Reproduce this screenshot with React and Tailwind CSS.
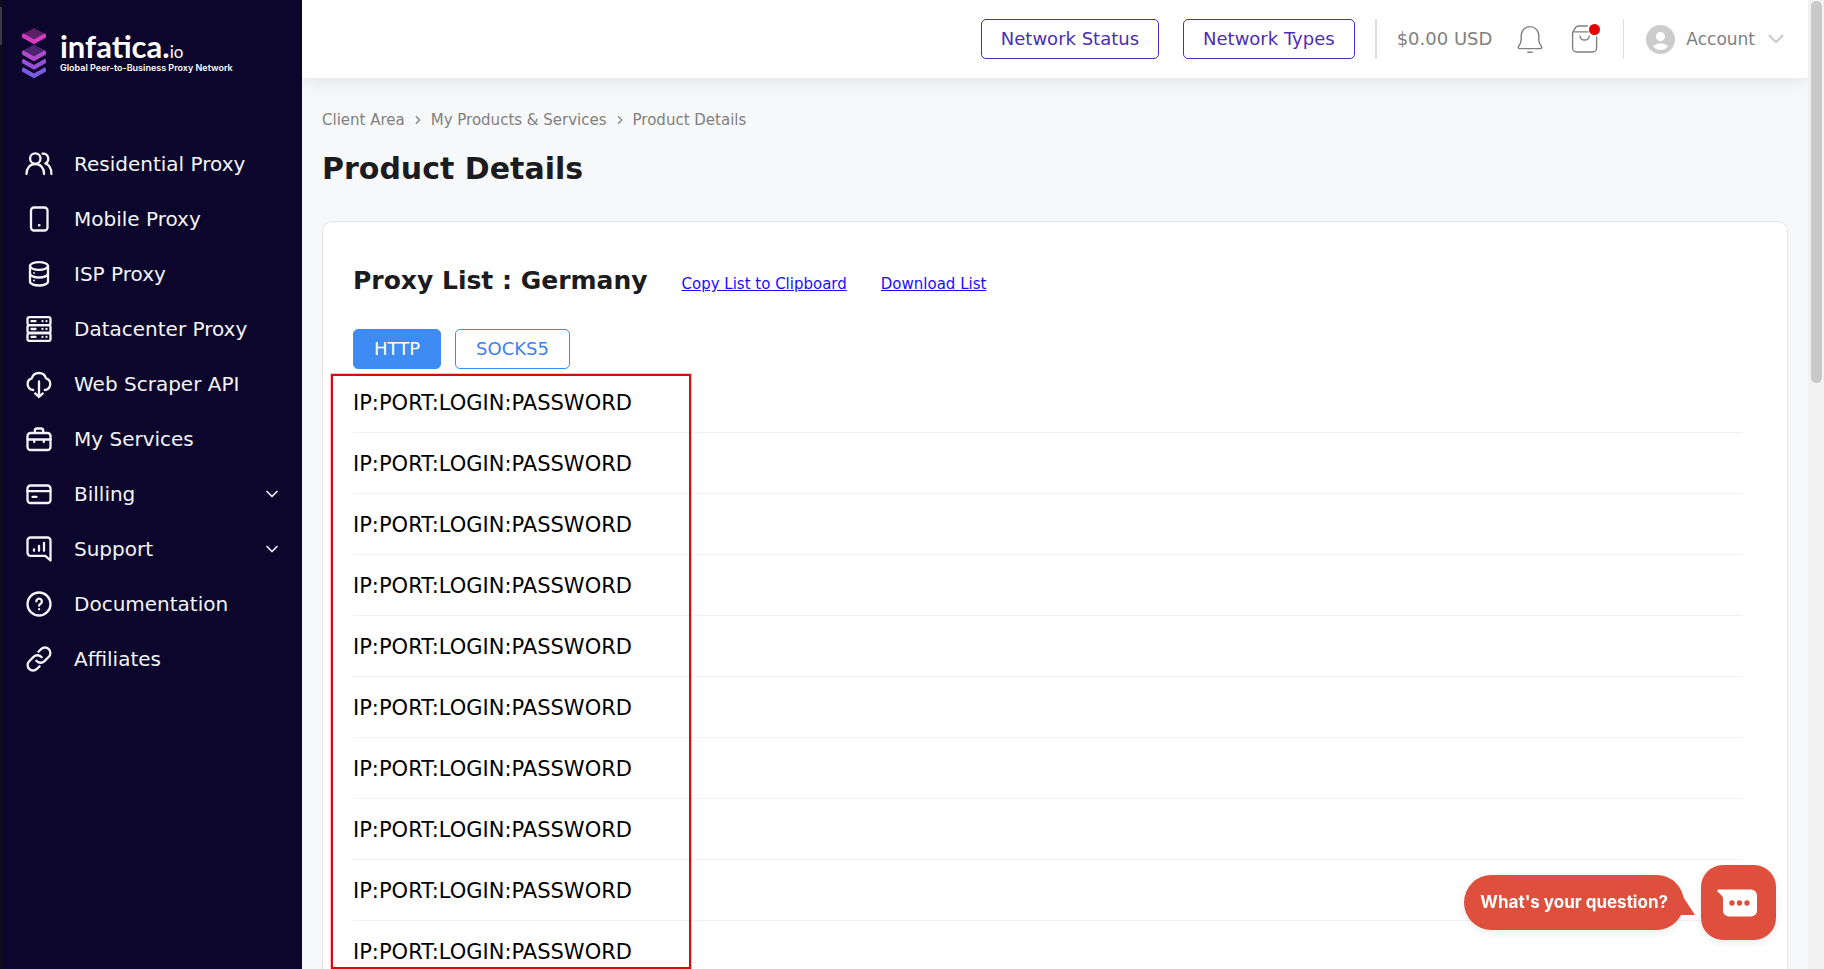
import { ChevronDown, ChevronRight } from "lucide-react";

function NavIcon({ children }) {
   return (
      <svg
         className="size-7 shrink-0"
         viewBox="0 0 28 28"
         fill="none"
         stroke="currentColor"
         strokeWidth="2.3"
         strokeLinecap="round"
         strokeLinejoin="round"
         aria-hidden="true"
      >
         {children}
      </svg>
   );
}

const menu = [
   {
      label: "Residential Proxy",
      icon: (
         <NavIcon>
            <circle cx="10.3" cy="8.6" r="5.2" />
            <path d="M1.5 24c0-6 3.6-10 8.8-10s8.8 4 8.8 10" />
            <path d="M17.4 3.6a5.2 5.2 0 0 1 3 9.8c3.6 1.4 6 5.4 6 10.6" />
         </NavIcon>
      ),
   },
   {
      label: "Mobile Proxy",
      icon: (
         <NavIcon>
            <rect x="6" y="2.5" width="16.5" height="23" rx="3" />
            <path d="M14.2 20.2v.1" strokeWidth="2.6" />
         </NavIcon>
      ),
   },
   {
      label: "ISP Proxy",
      icon: (
         <NavIcon>
            <ellipse cx="14" cy="6" rx="9" ry="3.8" />
            <path d="M5 6v15.5c0 2.3 4 4 9 4s9-1.7 9-4V6" />
            <path d="M5 13.5c0 2.3 4 4 9 4s9-1.7 9-4" />
            <path d="M9 12.8v.1M9 20.4v.1" strokeWidth="1.8" />
         </NavIcon>
      ),
   },
   {
      label: "Datacenter Proxy",
      icon: (
         <NavIcon>
            <rect x="2.5" y="2.2" width="23" height="7.9" rx="2" />
            <rect x="2.5" y="10.1" width="23" height="7.9" rx="2" />
            <rect x="2.5" y="18" width="23" height="7.9" rx="2" />
            <path d="M6.5 6.2h4M6.5 14h4M6.5 21.9h4" />
            <path d="M17.5 6.2v.01M21.5 6.2v.01M17.5 14v.01M21.5 14v.01M17.5 21.9v.01M21.5 21.9v.01" />
         </NavIcon>
      ),
   },
   {
      label: "Web Scraper API",
      icon: (
         <NavIcon>
            <path d="M8.2 20A6 6 0 0 1 6.8 8.3a7.4 7.4 0 0 1 14.2 0A6 6 0 0 1 19.8 20" />
            <path d="M14 11.5v15M10.2 23.4l3.8 3.4 3.8-3.4" />
         </NavIcon>
      ),
   },
   {
      label: "My Services",
      icon: (
         <NavIcon>
            <rect x="2.5" y="8" width="23" height="17" rx="3" />
            <path d="M9.8 8V5.8a2.3 2.3 0 0 1 2.3-2.3h3.8a2.3 2.3 0 0 1 2.3 2.3V8" />
            <path d="M2.5 14.5h23M9.2 14.5v2.5M18.8 14.5v2.5" />
         </NavIcon>
      ),
   },
   {
      label: "Billing",
      open: true,
      icon: (
         <NavIcon>
            <rect x="2.5" y="5.5" width="23" height="17.5" rx="3" />
            <path d="M2.5 11.2h23M7.5 16.8h4" />
         </NavIcon>
      ),
   },
   {
      label: "Support",
      open: true,
      icon: (
         <NavIcon>
            <path d="M25.5 25.5v-20a3 3 0 0 0-3-3h-17a3 3 0 0 0-3 3v12.300a3 3 0 0 0 3 3h14.800z" />
            <path d="M9 14.3v1.500M14 11v4.800M19 8v7.800" />
         </NavIcon>
      ),
   },
   {
      label: "Documentation",
      icon: (
         <NavIcon>
            <circle cx="14" cy="14" r="11.5" />
            <path d="M11.3 11.4a2.8 2.8 0 1 1 4.3 2.4c-1 .6-1.5 1-1.5 1.9M14.1 19.2v.1" />
         </NavIcon>
      ),
   },
   {
      label: "Affiliates",
      icon: (
         <NavIcon>
            <path d="M11.3 15.8a5.6 5.6 0 0 0 8.2.3l4.3-4.3a5.4 5.4 0 0 0-7.7-7.7l-2.7 2.7" />
            <path d="M16.7 12.2a5.6 5.6 0 0 0-8.2-.3l-4.3 4.3a5.4 5.4 0 0 0 7.7 7.7l2.7-2.7" />
         </NavIcon>
      ),
   },
];

const proxies = Array.from({ length: 10 }, () => "IP:PORT:LOGIN:PASSWORD");

function Logo() {
   return (
      <a href="#" className="flex items-start gap-[14px] pl-5 pt-7 text-white">
         <svg className="h-[50px] w-6 shrink-0" viewBox="0 0 24 50" aria-hidden="true">
            <path d="M12 0l12 6.5-12 7.5L0 6.5z" fill="#5b1f66" />
            <path d="M12 16.5l12 6.5-12 7.5L0 23z" fill="#4c2470" />
            <g fill="none" strokeWidth="4.2" strokeLinejoin="round">
               <path d="M0 7l12 6.800L24 7" stroke="#d43bc0" />
               <path d="M0 24l12 6.800L24 24" stroke="#b04bce" />
               <path d="M0 32.500l12 6.800 12-6.800" stroke="#9650d6" />
               <path d="M0 41l12 6.800L24 41" stroke="#7a5be0" />
            </g>
         </svg>
         <span className="flex flex-col pt-2">
            <span className="font-['Lato'] text-[31px] leading-5 font-bold">
               infatica.<span className="text-[17px] font-normal">io</span>
            </span>
            <span className="font-['Inter'] text-[9px] leading-3 font-semibold">
               Global Peer-to-Business Proxy Network
            </span>
         </span>
      </a>
   );
}

function Sidebar() {
   return (
      <aside className="flex w-[302px] shrink-0 bg-[#0c062c]">
         <div className="w-[2px] shrink-0 bg-[#111111] pt-[7px]">
            <div className="h-[38px] bg-[#3a3a3a]" />
         </div>
         <div className="flex-1">
            <Logo />
            <nav className="mt-[58px]">
               {menu.map((item) => (
                  <a
                     key={item.label}
                     href="#"
                     className="flex h-[55px] items-center pl-[23px] pr-5 text-xl text-gray-100"
                  >
                     {item.icon}
                     <span className="ml-[21px] flex-1">{item.label}</span>
                     {item.open && <ChevronDown className="size-5" />}
                  </a>
               ))}
            </nav>
         </div>
      </aside>
   );
}

function Header() {
   return (
      <header className="flex h-[78px] shrink-0 items-center justify-end bg-white pr-6 text-lg text-[#808080] shadow-[0_4px_16px_rgba(0,0,0,0.08)]">
         <button className="h-10 rounded-[5px] border border-[#4b2db9] px-[19px] text-[#4b2db9]">
            Network Status
         </button>
         <button className="ml-6 h-10 rounded-[5px] border border-[#4b2db9] px-[19px] text-[#4b2db9]">
            Network Types
         </button>
         <div className="ml-5 h-10 w-[2px] bg-[#dedede]" />
         <span className="ml-5">$0.00 USD</span>
         <button aria-label="Notifications" className="ml-6">
            <svg className="size-7" viewBox="0 0 28 28" fill="none" stroke="#808080" strokeWidth="1.4" strokeLinecap="round" strokeLinejoin="round">
               <path d="M5.2 10.4a8.8 8.8 0 0 1 17.6 0v4.2c0 2.6.8 4.4 2.4 6.4 1 1.3.6 2.6-1 2.6H3.8c-1.6 0-2-1.3-1-2.6 1.6-2 2.4-3.8 2.4-6.4z" />
               <path d="M11.8 27.2h4.4" />
            </svg>
         </button>
         <button aria-label="Cart" className="relative ml-[27px]">
            <svg className="size-7" viewBox="0 0 28 28" fill="none" stroke="#808080" strokeWidth="1.4" strokeLinecap="round" strokeLinejoin="round">
               <path d="M16.5 1H7.6c-1.4 0-2.3.4-3 1.5L2.2 6.4C1.7 7.2 1.6 7.8 1.6 8.8V23a4 4 0 0 0 4 4h16a4 4 0 0 0 4-4V12M2.3 6.9h14.7" />
               <path d="M9 11.3a4.7 4.7 0 0 0 9.2 0" />
            </svg>
            <span className="absolute -top-px -right-px size-[11px] rounded-full bg-[#e30000]" />
         </button>
         <div className="ml-6 h-10 w-px bg-[#dedede]" />
         <button className="ml-[22px] flex items-center">
            <svg className="size-[29px]" viewBox="0 0 29 29" aria-hidden="true">
               <circle cx="14.5" cy="14.5" r="14.5" fill="#cccccc" />
               <circle cx="14.5" cy="11.5" r="4.5" fill="#fff" />
               <path d="M7 21.8c1.6-2.4 4.4-3.6 7.5-3.6s5.9 1.2 7.5 3.6c-1.8 2-4.5 3.2-7.5 3.2S8.8 23.8 7 21.8z" fill="#fff" />
            </svg>
            <span className="ml-[11px] text-[17px]">Account</span>
            <svg className="ml-[13px] h-[10px] w-4" viewBox="0 0 16 10" fill="none" stroke="#c8c8c8" strokeWidth="2" aria-hidden="true">
               <path d="M1 1.2l7 7 7-7" />
            </svg>
         </button>
      </header>
   );
}

function ProxyCard() {
   return (
      <section className="mt-8 rounded-t-[10px] border border-b-0 border-[#e2e4e6] bg-white pt-[43px] pr-[45px] pl-[30px]">
         <div className="flex items-baseline leading-8">
            <h2 className="text-[25px] font-bold text-[#1b1b20]">Proxy List : Germany</h2>
            <a href="#" className="ml-[34px] text-[15px] text-[#1a0dff] underline">
               Copy List to Clipboard
            </a>
            <a href="#" className="ml-[34px] text-[15px] text-[#1a0dff] underline">
               Download List
            </a>
         </div>
         <div className="mt-[29px] flex gap-[14px] text-lg">
            <button className="h-10 rounded-[5px] border border-[#3d8bf3] bg-[#3d8bf3] px-5 text-white">
               HTTP
            </button>
            <button className="h-10 rounded-[5px] border border-[#3d8bf3] px-5 text-[#3d7fee]">
               SOCKS5
            </button>
         </div>
         <div className="relative mt-[3px]">
            <ul className="text-[21px] text-black">
               {proxies.map((proxy, i) => (
                  <li key={i} className="flex h-[61px] items-center border-b border-[#f1f1f1] pt-1">
                     {proxy}
                  </li>
               ))}
            </ul>
            <div className="absolute top-[2px] -left-[22px] h-[595px] w-[360px] border-2 border-[#d60c0c] shadow-[0_0_0_1px_#f6c4c4]" />
         </div>
      </section>
   );
}

function ChatWidget() {
   return (
      <div className="fixed right-12 bottom-[29px] flex items-center gap-[17px]">
         <button className="relative h-[55px] rounded-full bg-[#de4f3e] px-4 font-['Inter'] text-[17px] font-bold text-white shadow-[0_3px_8px_rgba(0,0,0,0.08)]">
            What's your question?
            <svg className="absolute top-[14px] -right-[11px] h-[26px] w-[22px]" viewBox="0 0 22 26" fill="#de4f3e" aria-hidden="true">
               <path d="M0 0h7c.5 2 1.500 5 2.500 7L22 26H0z" />
            </svg>
         </button>
         <button
            aria-label="Open chat"
            className="flex size-[75px] items-center justify-center rounded-[22px] bg-[#de4f3e] shadow-[0_3px_8px_rgba(0,0,0,0.08)]"
         >
            <svg className="mr-1 h-7 w-10" viewBox="0 0 40 28" aria-hidden="true">
               <path d="M1.500.5H34a6 6 0 0 1 6 6v15a6 6 0 0 1-6 6H12a6 6 0 0 1-6-6V9.500C6 7.500 4.500 6 1 3 0 2 .2.5 1.500.5z" fill="#fff" />
               <circle cx="15" cy="14" r="2.7" fill="#de4f3e" />
               <circle cx="22.5" cy="14" r="2.7" fill="#de4f3e" />
               <circle cx="30" cy="14" r="2.7" fill="#de4f3e" />
            </svg>
         </button>
      </div>
   );
}

export default function App() {
   return (
      <div className="flex h-screen overflow-hidden bg-[#f7f8fa] font-[Verdana,'DejaVu_Sans',sans-serif]">
         <Sidebar />
         <div className="flex min-w-0 flex-1 flex-col overflow-hidden">
            <Header />
            <main className="px-5 pt-8">
               <nav className="flex items-center gap-[6px] text-[15px] leading-5 text-[#808080]">
                  <a href="#">Client Area</a>
                  <ChevronRight className="size-[14px]" />
                  <a href="#">My Products &amp; Services</a>
                  <ChevronRight className="size-[14px]" />
                  <span>Product Details</span>
               </nav>
               <h1 className="mt-[19px] text-3xl leading-10 font-bold text-[#1b1b20]">
                  Product Details
               </h1>
               <ProxyCard />
            </main>
         </div>
         <div className="w-4 shrink-0 bg-[#f1f1f1] pt-px pl-[3px]">
            <div className="h-[382px] w-[11px] rounded-full bg-[#c9c9c9]" />
         </div>
         <ChatWidget />
      </div>
   );
}
